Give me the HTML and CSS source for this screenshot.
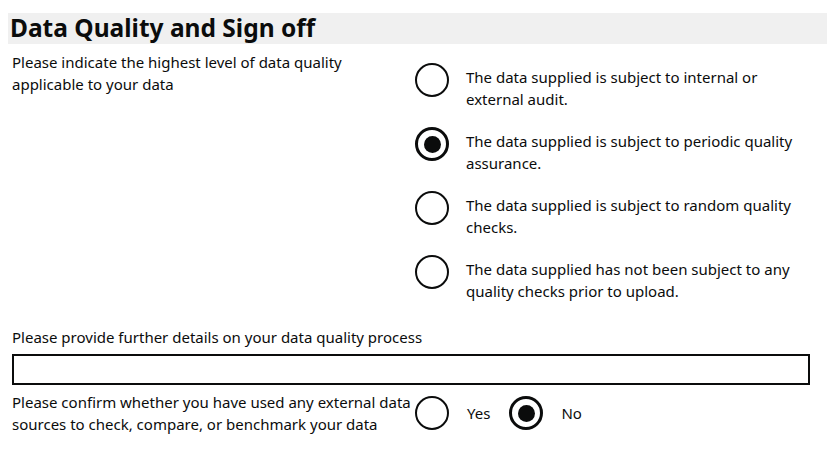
FILE: index.html
```html
<!DOCTYPE html>
<html lang="en">
<head>
<meta charset="utf-8">
<title>Data Quality and Sign off</title>
<link rel="stylesheet" href="styles.css">
</head>
<body>
<h1 class="title">Data Quality and Sign off</h1>
<div class="content">
  <div class="question">
    <div class="q-label">Please indicate the highest level of data quality applicable to your data</div>
    <div class="options">
      <div class="option">
        <span class="radio"></span>
        <span class="opt-label">The data supplied is subject to internal or external audit.</span>
      </div>
      <div class="option">
        <span class="radio checked"><span class="dot"></span></span>
        <span class="opt-label">The data supplied is subject to periodic quality assurance.</span>
      </div>
      <div class="option">
        <span class="radio"></span>
        <span class="opt-label">The data supplied is subject to random quality checks.</span>
      </div>
      <div class="option">
        <span class="radio"></span>
        <span class="opt-label">The data supplied has not been subject to any quality checks prior to upload.</span>
      </div>
    </div>
  </div>

  <div class="details">
    <div class="d-label">Please provide further details on your data quality process</div>
    <div class="textbox"></div>
  </div>

  <div class="question confirm">
    <div class="q-label">Please confirm whether you have used any external data sources to check, compare, or benchmark your data</div>
    <div class="inline-options">
      <span class="radio"></span>
      <span class="inline-label">Yes</span>
      <span class="radio checked"><span class="dot"></span></span>
      <span class="inline-label">No</span>
    </div>
  </div>
</div>
</body>
</html>
```

FILE: styles.css
```css
html, body {
  background: #ffffff;
}
body {
  margin: 0;
  padding: 13px 0 0 8px;
  font-family: "Noto Sans", "Liberation Sans", Arial, sans-serif;
  font-size: 15px;
  line-height: 22px;
  color: #0b0c0c;
}
.title {
  margin: 0;
  height: 31px;
  padding-left: 2px;
  background: #f0f0f0;
  font-size: 24.5px;
  line-height: 30px;
  font-weight: 700;
  color: #0b0c0c;
}
.content {
  padding-left: 4px;
  width: 798px;
}
.question {
  display: grid;
  grid-template-columns: 403px 1fr;
}
.q-label {
  padding-top: 7px;
}
.options {
  padding-top: 19px;
  display: flex;
  flex-direction: column;
  gap: 17px;
}
.option {
  display: flex;
  align-items: flex-start;
}
.radio {
  flex: none;
  width: 34px;
  height: 34px;
  box-sizing: border-box;
  border: 2px solid #0b0c0c;
  border-radius: 50%;
  display: flex;
  align-items: center;
  justify-content: center;
}
.radio.checked {
  border-width: 3px;
}
.dot {
  width: 17px;
  height: 17px;
  border-radius: 50%;
  background: #0b0c0c;
}
.opt-label {
  margin-left: 17px;
  padding-top: 3px;
  max-width: 345px;
}
.details {
  margin-top: 24px;
}
.textbox {
  margin-top: 6px;
  height: 31px;
  box-sizing: border-box;
  border: 2px solid #0b0c0c;
}
.confirm {
  margin-top: 6px;
}
.confirm .q-label {
  padding-top: 0;
}
.inline-options {
  display: flex;
  align-items: center;
}
.inline-label {
  margin-left: 18px;
  margin-right: 19px;
}
```
